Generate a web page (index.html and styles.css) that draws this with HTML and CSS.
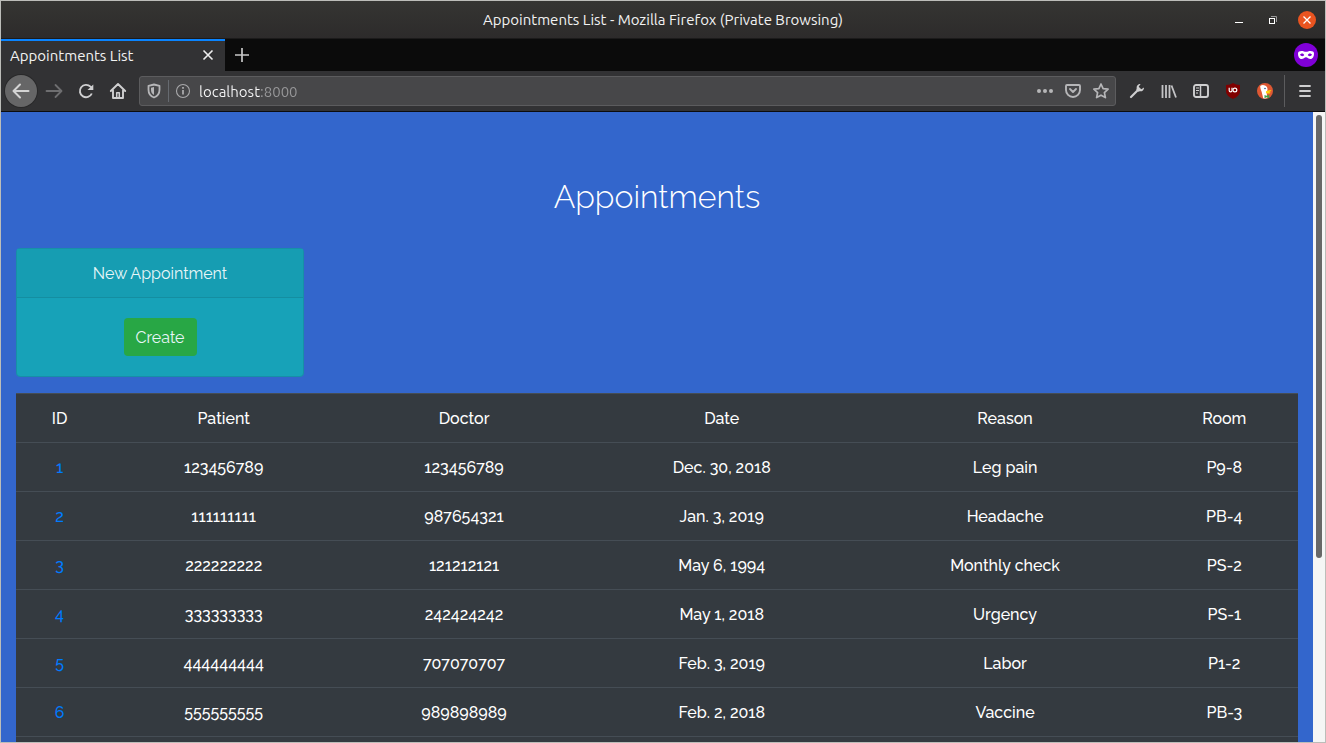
FILE: index.html
```html
<!DOCTYPE html>
<html lang="en">
<head>
<meta charset="utf-8">
<title>Appointments List</title>
<link rel="stylesheet" href="styles.css">
</head>
<body>
<div class="window">
  <header class="titlebar">
    <span class="titlebar-side"></span>
    <span class="titlebar-text">Appointments List - Mozilla Firefox (Private Browsing)</span>
    <span class="titlebar-side window-controls">
      <button class="window-button" aria-label="Minimize"><svg width="18" height="18" viewBox="0 0 18 18"><path d="M5 11.5h8" stroke="#fff"/></svg></button>
      <button class="window-button" aria-label="Restore"><svg width="18" height="18" viewBox="0 0 18 18"><path d="M7 5.500h5.500v5.500" fill="none" stroke="#999"/><rect x="5.500" y="7.500" width="5" height="5" fill="none" stroke="#fff"/></svg></button>
      <button class="window-button" aria-label="Close window"><svg width="18" height="18" viewBox="0 0 18 18"><circle cx="9" cy="9" r="9" fill="#e95420"/><path d="M5.500 5.500l7 7M12.500 5.500l-7 7" stroke="#fff" stroke-width="1.300"/></svg></button>
    </span>
  </header>

  <nav class="tabs">
    <div class="tab">
      <span>Appointments List</span>
      <button class="icon-button" aria-label="Close tab"><svg width="16" height="16" viewBox="0 0 16 16"><path d="M3.500 3.500l9 9M12.500 3.500l-9 9" stroke="#eee" stroke-width="1.600"/></svg></button>
    </div>
    <button class="icon-button new-tab" aria-label="New tab"><svg width="16" height="16" viewBox="0 0 16 16"><path d="M8 1v14M1 8h14" stroke="#c8c8c8" stroke-width="1.700"/></svg></button>
    <svg class="private" width="24" height="24" viewBox="0 0 24 24"><circle cx="12" cy="12" r="12" fill="#8000d7"/><path fill="#fff" fill-rule="evenodd" d="M4 10.500C4 8.700 5.500 8 7.500 8c2 0 3 .8 4.500.8S14.500 8 16.500 8c2 0 3.500.7 3.500 2.500 0 3-1.300 5.500-3.500 5.500-2 0-3-1.800-4.500-1.800S9.500 16 7.500 16C5.300 16 4 13.500 4 10.500zM8.200 10.500c-1 0-1.900.6-2.200 1.300.5.800 1.300 1.400 2.300 1.400s1.700-.5 1.900-1.200c-.3-.9-1.100-1.500-2-1.500zm7.600 0c-.9 0-1.700.6-2 1.500.2.700.9 1.200 1.900 1.200s1.800-.6 2.300-1.400c-.3-.7-1.200-1.300-2.200-1.300z"/></svg>
  </nav>

  <div class="toolbar">
    <button class="icon-button back" aria-label="Back"><svg width="18" height="18" viewBox="0 0 18 18" fill="none" stroke="#d4d4d4" stroke-width="2" stroke-linecap="round" stroke-linejoin="round"><path d="M16.500 9H2M8 2.500L1.500 9 8 15.500"/></svg></button>
    <button class="icon-button" aria-label="Forward" disabled><svg width="18" height="18" viewBox="0 0 18 18" fill="none" stroke="#6e6e70" stroke-width="1.800" stroke-linecap="round" stroke-linejoin="round"><path d="M1.500 9H16M10.500 3L16.500 9l-6 6"/></svg></button>
    <button class="icon-button" aria-label="Reload"><svg width="16" height="16" viewBox="0 0 16 16"><path d="M13.800 10.500A6.200 6.200 0 1 1 12.500 3.700l1 1" fill="none" stroke="#cfcfd0" stroke-width="1.900"/><path d="M15.300 1.500V7H9.500z" fill="#cfcfd0"/></svg></button>
    <button class="icon-button" aria-label="Home"><svg width="18" height="18" viewBox="0 0 18 18" fill="none" stroke="#cfcfd0" stroke-width="1.900" stroke-linecap="round" stroke-linejoin="round"><path d="M1.800 9L9 2 16.200 9M4 8.500v7.500h10V8.500"/><path d="M7.700 16v-5.300h2.600V16" stroke-width="1.500"/></svg></button>
    <div class="urlbar">
      <svg width="16" height="16" viewBox="0 0 16 16"><path d="M8 1.500l5.500 1.300v4C13.500 10.500 11.500 13.300 8 14.500 4.500 13.300 2.500 10.500 2.500 6.800v-4z" fill="none" stroke="#b6b6b8" stroke-width="1.800" stroke-linejoin="round"/><path d="M8 4v8C6 11 5 9.200 5 6.800V4.700z" fill="#b6b6b8"/></svg>
      <span class="url-divider"></span>
      <svg width="16" height="16" viewBox="0 0 16 16"><circle cx="8" cy="8" r="6.500" fill="none" stroke="#a9a9ab" stroke-width="1.100"/><path d="M8 7v4.500M8 4v1.700" stroke="#b6b6b8" stroke-width="1.600"/></svg>
      <input class="url-input" type="text" value="localhost:8000" aria-label="Address">
      <button class="icon-button url-action" aria-label="Page actions"><svg width="18" height="16" viewBox="0 0 18 16" fill="#b6b6b8"><circle cx="3" cy="8" r="2"/><circle cx="9" cy="8" r="2"/><circle cx="15" cy="8" r="2"/></svg></button>
      <button class="icon-button url-action" aria-label="Save to Pocket"><svg width="16" height="16" viewBox="0 0 16 16" fill="none" stroke="#b6b6b8" stroke-width="1.900" stroke-linecap="round" stroke-linejoin="round"><path d="M2 2h12a1 1 0 0 1 1 1v4A7 7 0 0 1 1 7V3a1 1 0 0 1 1-1zM5 6l3 3 3-3"/></svg></button>
      <button class="icon-button url-action" aria-label="Bookmark"><svg width="16" height="16" viewBox="0 0 16 16" fill="none" stroke="#b6b6b8" stroke-width="1.700" stroke-linejoin="round"><path d="M8 1l2.100 4.600 5 .6-3.700 3.400 1 5L8 12.200l-4.400 2.400 1-5L.9 6.200l5-.6z"/></svg></button>
    </div>
    <button class="icon-button" aria-label="Developer tools"><svg width="16" height="16" viewBox="0 0 16 16"><path d="M2 14L9 7" stroke="#cfcfd0" stroke-width="2.200" stroke-linecap="round"/><path d="M15 4.400L12.300 6.300 9.700 3.700 11.600 1C9.300.8 7.300 2.700 7.700 5.200L7.300 6.800l1.900 1.900 1.600-.4c2.500.4 4.400-1.600 4.200-3.900z" fill="#cfcfd0"/></svg></button>
    <button class="icon-button" aria-label="Library"><svg width="16" height="16" viewBox="0 0 16 16" stroke="#c4c4c6" stroke-width="1.800"><path d="M1.500 2v13M5 2v13M8.500 2v13M10.500 2.500L15 14.500"/></svg></button>
    <button class="icon-button" aria-label="Sidebar"><svg width="16" height="14" viewBox="0 0 16 14" fill="none" stroke="#cfcfd0"><rect x="1" y="1" width="14" height="12" rx="2" stroke-width="1.900"/><path d="M7.500 1v12" stroke-width="1.500"/><path d="M3 4h3M3 6.500h3M3 9h2"/></svg></button>
    <button class="icon-button" aria-label="Content blocker"><svg width="16" height="16" viewBox="0 0 16 16"><path d="M8 0c2 1.300 4 2 7 2v6c0 4-3.500 6.400-7 8-3.500-1.600-7-4-7-8V2c3 0 5-.7 7-2z" fill="#800000"/><path d="M4.200 4.700v2.800a1.400 1.400 0 0 0 2.800 0V4.700" fill="none" stroke="#fff" stroke-width="1.200"/><circle cx="9.900" cy="7" r="1.900" fill="none" stroke="#fff" stroke-width="1.200"/></svg></button>
    <button class="icon-button" aria-label="Privacy extension"><svg width="16" height="16" viewBox="0 0 16 16"><circle cx="8" cy="8" r="8" fill="#de5833"/><path d="M3.200 3C4.500 1.700 6.500 1.600 8 2.400c2 .9 2.700 2.500 2.500 4.600L9.600 9.500l.9 5.600c-1.500.6-3 .6-4.300.2L4.700 9C4 7 3.200 5 3.200 3z" fill="#fff"/><path d="M9 8.300c2-1 4.500-1.400 5.300-.8.400.6-1.500 1.200-2.600 1.600 1 .2 1.900.3 1.700.9-.4.700-3.200.8-4.400 0z" fill="#fdd20a"/><path d="M7.500 12l2 .8 2.800-1v3.400l-2.800-1-2 1z" fill="#43a047"/><circle cx="8" cy="5.500" r=".8" fill="#2d4f8e"/></svg></button>
    <button class="icon-button menu" aria-label="Open menu"><svg width="16" height="16" viewBox="0 0 16 16" stroke="#cfcfd0" stroke-width="1.800" stroke-linecap="round"><path d="M3 3h10M3 8h10M3 13h10"/></svg></button>
  </div>

  <div class="viewport">
    <main class="page">
      <h1>Appointments</h1>
      <section class="card">
        <div class="card-header">New Appointment</div>
        <div class="card-body"><button class="create">Create</button></div>
      </section>
      <table class="appointments">
        <colgroup><col class="col-id"><col class="col-patient"><col class="col-doctor"><col class="col-date"><col class="col-reason"><col class="col-room"></colgroup>
        <thead>
          <tr><th>ID</th><th>Patient</th><th>Doctor</th><th>Date</th><th>Reason</th><th>Room</th></tr>
        </thead>
        <tbody>
          <tr><td><a href="#1">1</a></td><td>123456789</td><td>123456789</td><td>Dec. 30, 2018</td><td>Leg pain</td><td>P9-8</td></tr>
          <tr><td><a href="#2">2</a></td><td>111111111</td><td>987654321</td><td>Jan. 3, 2019</td><td>Headache</td><td>PB-4</td></tr>
          <tr><td><a href="#3">3</a></td><td>222222222</td><td>121212121</td><td>May 6, 1994</td><td>Monthly check</td><td>PS-2</td></tr>
          <tr><td><a href="#4">4</a></td><td>333333333</td><td>242424242</td><td>May 1, 2018</td><td>Urgency</td><td>PS-1</td></tr>
          <tr><td><a href="#5">5</a></td><td>444444444</td><td>707070707</td><td>Feb. 3, 2019</td><td>Labor</td><td>P1-2</td></tr>
          <tr><td><a href="#6">6</a></td><td>555555555</td><td>989898989</td><td>Feb. 2, 2018</td><td>Vaccine</td><td>PB-3</td></tr>
          <tr><td colspan="6"></td></tr>
        </tbody>
      </table>
    </main>
    <div class="scroll-track"><div class="scroll-thumb"></div></div>
  </div>
</div>
</body>
</html>
```
FILE: styles.css
```css
* { box-sizing: border-box; }

body {
  margin: 0;
  font-family: Ubuntu, "Noto Sans", sans-serif;
  font-size: 15px;
  color: #f2f2f2;
}

button { font: inherit; color: inherit; border: 0; padding: 0; background: none; }
svg { display: block; flex: none; }

.window {
  display: flex;
  flex-direction: column;
  height: 100vh;
  overflow: hidden;
  border: 1px solid #bcbdb9;
  background: #323234;
}

.titlebar {
  display: flex;
  align-items: center;
  flex: none;
  height: 38px;
  padding: 0 9px;
  background: linear-gradient(#353532, #2d2b2b);
  border-bottom: 1px solid #1c1b1b;
}
.titlebar-side { flex: 1; }
.window-controls { display: flex; justify-content: flex-end; gap: 16px; }

.tabs {
  display: flex;
  align-items: center;
  flex: none;
  height: 32px;
  padding-right: 7px;
  background: #0b0b0b;
}
.tab {
  display: flex;
  align-items: center;
  justify-content: space-between;
  width: 224px;
  height: 100%;
  padding: 0 9px 2px;
  background: #323234;
  border-top: 2px solid #0a84ff;
}
.new-tab { margin-left: 9px; }
.private { margin-left: auto; }

.toolbar {
  display: flex;
  align-items: center;
  flex: none;
  height: 41px;
  padding-left: 4px;
  background: #323234;
  border-bottom: 1px solid #0c0c0d;
}
.icon-button {
  display: flex;
  align-items: center;
  justify-content: center;
  flex: none;
}
.toolbar > .icon-button { width: 32px; height: 32px; }
.toolbar > .back { margin-right: 1px; background: #666667; border-radius: 50%; box-shadow: 0 0 0 1px #29292a; }
.toolbar > .menu { width: 41px; margin-left: 3px; border-left: 1px solid #5c5c5e; }

.urlbar {
  display: flex;
  align-items: center;
  flex: 1;
  gap: 6px;
  height: 30px;
  margin: 0 5px;
  padding: 0 3px 0 6px;
  background: #474749;
  border: 1px solid #5c5c5e;
  border-radius: 3px;
}
.url-divider { width: 1px; height: 22px; background: #666a70; }
.url-input {
  flex: 1;
  min-width: 0;
  height: 24px;
  padding: 0 2px;
  border: 0;
  outline: 0;
  font: inherit;
  color: transparent;
  background: linear-gradient(90deg, #f9f9fa 63px, #98989a 63px);
  background-clip: text;
  -webkit-background-clip: text;
}
.url-action { width: 22px; }

.viewport { display: flex; flex: 1; min-height: 0; }
.page {
  flex: 1;
  min-width: 0;
  overflow: hidden;
  padding: 65px 15px 0;
  background: #3366cc;
  font-family: Raleway, Lato, sans-serif;
  font-size: 16px;
  line-height: 24px;
  text-align: center;
}
h1 {
  margin: 0 0 31px;
  font-size: 32px;
  line-height: 40px;
  font-weight: 300;
  color: #fff;
}

.card {
  width: 288px;
  max-width: 100%;
  margin-bottom: 16px;
  background: #17a2b8;
  border: 1px solid #178fa7;
  border-radius: 4px;
  color: #e8f6f8;
}
.card-header {
  padding: 13px 20px 11px;
  background: #169db2;
  border-bottom: 1px solid #148ea1;
}
.card-body { padding: 20px; }
.create {
  height: 38px;
  padding: 2px 12px 0;
  background: #28a745;
  border-radius: 4px;
}

.appointments {
  width: 100%;
  table-layout: fixed;
  border-collapse: collapse;
  background: #343a40;
  color: #fff;
}
.appointments th,
.appointments td {
  height: 49px;
  padding: 13px 12px 11px;
  border-top: 1px solid #454d55;
  font-weight: 500;
}
.appointments a { color: #007bff; text-decoration: none; }
.col-id { width: 6.800%; }
.col-patient { width: 18.800%; }
.col-doctor { width: 18.700%; }
.col-date { width: 21.500%; }
.col-reason { width: 22.700%; }
.col-room { width: 11.500%; }

.scroll-track { flex: none; width: 12px; padding: 3px; background: #f5f5f5; }
.scroll-thumb { height: 71%; border-radius: 3px; background: #676767; }
```
